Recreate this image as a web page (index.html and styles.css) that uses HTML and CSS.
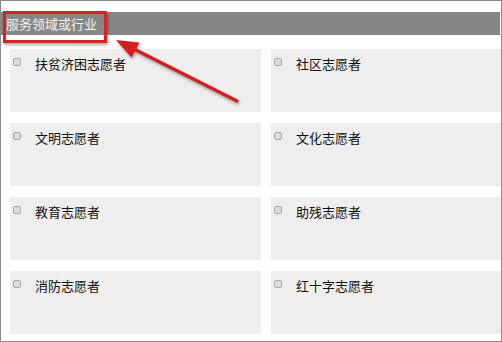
FILE: index.html
```html
<!DOCTYPE html>
<html lang="zh-CN">
<head>
<meta charset="utf-8">
<title>服务领域或行业</title>
<link rel="stylesheet" href="styles.css">
</head>
<body>
<div class="frame">
  <div class="section-title">服务领域或行业</div>
  <div class="grid">
    <label class="card"><span class="box"></span><span class="label">扶贫济困志愿者</span></label>
    <label class="card"><span class="box"></span><span class="label">社区志愿者</span></label>
    <label class="card"><span class="box"></span><span class="label">文明志愿者</span></label>
    <label class="card"><span class="box"></span><span class="label">文化志愿者</span></label>
    <label class="card"><span class="box"></span><span class="label">教育志愿者</span></label>
    <label class="card"><span class="box"></span><span class="label">助残志愿者</span></label>
    <label class="card"><span class="box"></span><span class="label">消防志愿者</span></label>
    <label class="card"><span class="box"></span><span class="label">红十字志愿者</span></label>
  </div>
  <div class="highlight"></div>
  <svg class="arrow" width="502" height="342" viewBox="0 0 502 342">
    <path d="M237 101 L128 46" stroke="#d61c1c" stroke-width="3.2" stroke-linecap="round" fill="none"/>
    <polygon points="116,40 139.5,42.5 131.5,57.5" fill="#d61c1c"/>
  </svg>
</div>
</body>
</html>
```

FILE: styles.css
```css
html, body {
  margin: 0;
  padding: 0;
  background: #ffffff;
}

.frame {
  position: relative;
  width: 502px;
  height: 342px;
  box-sizing: border-box;
  border: 1px solid #8a8a8a;
  padding: 11px 0 0 0;
  overflow: hidden;
  font-family: "Noto Sans CJK SC", "Liberation Sans", sans-serif;
}

.section-title {
  height: 23px;
  margin-right: 1px;
  background: #878787;
  color: #f4f4f4;
  font-size: 13px;
  line-height: 23px;
  padding-left: 5px;
}

.grid {
  display: grid;
  grid-template-columns: 251px 1fr;
  grid-auto-rows: 63px;
  column-gap: 10px;
  row-gap: 11px;
  margin-top: 14px;
  padding-left: 9px;
}

.card {
  display: flex;
  align-items: flex-start;
  background: #eeeeee;
  padding: 8px 0 0 3px;
}

.box {
  width: 6px;
  height: 6px;
  border: 1px solid #a8a8a8;
  border-radius: 2px;
  background: #dcdcdc;
  margin-top: 1px;
  flex: none;
}

.label {
  margin-left: 14px;
  font-size: 13px;
  line-height: 13px;
  color: #111111;
  margin-top: 0;
}

.highlight {
  position: absolute;
  left: 2px;
  top: 10px;
  width: 98px;
  height: 26px;
  border: 3px solid #d42424;
  box-shadow: 1px 2px 3px rgba(0, 0, 0, 0.35);
}

.arrow {
  position: absolute;
  left: -1px;
  top: -1px;
  filter: drop-shadow(1px 2px 1.5px rgba(0, 0, 0, 0.35));
}
```
